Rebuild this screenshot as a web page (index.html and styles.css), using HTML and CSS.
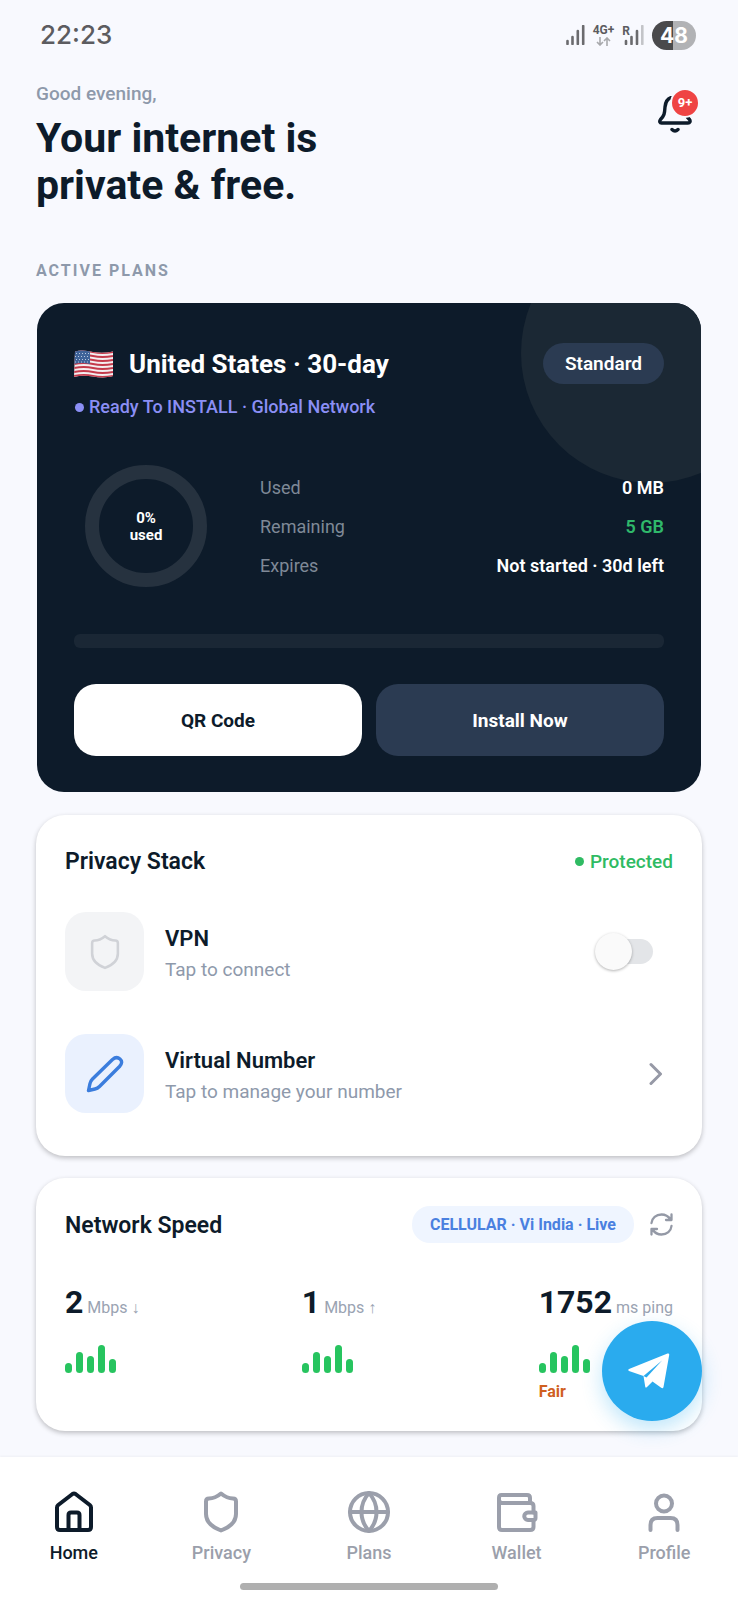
FILE: index.html
```html
<!DOCTYPE html>
<html lang="en">
<head>
    <meta charset="UTF-8">
    <meta name="viewport" content="width=device-width, initial-scale=1.0">
    <title>Home</title>
    <link rel="stylesheet" href="styles.css">
</head>
<body>
    <div class="status-bar">
        <span class="time">22:23</span>
        <div class="status-icons">
            <svg class="signal" width="19" height="20" viewBox="0 0 19 20">
                <path d="M1.5 16v3M6.5 12v7M11.8 6v13M17.2 1v18" stroke="#6b6b6e" stroke-width="2.6" stroke-linecap="round"/>
            </svg>
            <div class="network">
                <span>4G+</span>
                <svg width="15" height="9" viewBox="0 0 15 9" fill="none" stroke="#a8a9ac" stroke-width="1.6">
                    <path d="M4 0v8M1 5l3 3 3-3M11 9V1M8 4l3-3 3 3"/>
                </svg>
            </div>
            <div class="roaming">
                <span>R</span>
                <svg width="20" height="20" viewBox="0 0 20 20">
                    <path d="M2 16v3M7.5 12v7M13 6v13" stroke="#6b6b6e" stroke-width="2.6" stroke-linecap="round"/>
                    <path d="M18.3 1v18" stroke="#c3c4c8" stroke-width="2.6" stroke-linecap="round"/>
                </svg>
            </div>
            <span class="battery">48</span>
        </div>
    </div>

    <main class="content">
        <header class="header">
            <div>
                <p class="greeting">Good evening,</p>
                <h1>Your internet is<br>private &amp; free.</h1>
            </div>
            <button class="bell" type="button" aria-label="Notifications">
                <svg width="34" height="38" viewBox="0 0 34 38" fill="none" stroke="#0d1b2a" stroke-width="3.4" stroke-linecap="round" stroke-linejoin="round">
                    <path d="M17 1C10.500 1 7.500 5 7 11c-.4 7-.8 8.500-4.500 12.500-1.500 2-.5 3.500 1 3.500h26.500c1.800 0 2.800-1.500 1.500-3.500-4-4-4.500-5.500-4.500-12.500 0-6-3-10-10-10z"/>
                    <path d="M14 33.500q3 3 6 0"/>
                </svg>
                <span class="badge">9+</span>
            </button>
        </header>

        <h2 class="section-title">ACTIVE PLANS</h2>

        <section class="plan">
            <div class="plan-head">
                <svg class="flag" width="39" height="28" viewBox="0 0 39 28">
                    <clipPath id="wave"><path d="M1 1.500C8 -.5 13 1 19 2s13 1 20-.5V26c-7 2-14 1.500-20 .5S7 25 0 27z"/></clipPath>
                    <g clip-path="url(#wave)">
                        <path d="M0 0h39v28H0z" fill="#f4eef0"/>
                        <path d="M0 2q10-2 19 0t20 0M0 6q10-2 19 0t20 0M0 10q10-2 19 0t20 0M0 14q10-2 19 0t20 0M0 18q10-2 19 0t20 0M0 22q10-2 19 0t20 0M0 26q10-2 19 0t20 0" fill="none" stroke="#c43a4b" stroke-width="2"/>
                        <path d="M0 0h16v14Q8 12 0 14z" fill="#3f6399"/>
                        <path d="M2 3.500h14M1 6.500h14M2 9.500h14M1 12h14" stroke="#b9c9e0" stroke-width="1" stroke-dasharray="1 2"/>
                    </g>
                </svg>
                <h3>United States · 30-day</h3>
                <span class="tier">Standard</span>
            </div>
            <p class="plan-state"><i class="dot"></i>Ready To INSTALL · Global Network</p>
            <div class="usage">
                <div class="ring">0%<br>used</div>
                <dl class="stats">
                    <div><dt>Used</dt><dd>0 MB</dd></div>
                    <div><dt>Remaining</dt><dd class="green">5 GB</dd></div>
                    <div><dt>Expires</dt><dd>Not started · 30d left</dd></div>
                </dl>
            </div>
            <div class="progress"></div>
            <div class="actions">
                <button class="btn btn-light" type="button">QR Code</button>
                <button class="btn btn-dark" type="button">Install Now</button>
            </div>
        </section>

        <section class="card privacy">
            <div class="card-head">
                <h3>Privacy Stack</h3>
                <span class="protected"><i class="dot"></i>Protected</span>
            </div>
            <div class="row">
                <span class="tile tile-gray">
                    <svg width="30" height="36" viewBox="0 0 34 42" fill="none" stroke="#d0d2d7" stroke-width="3" stroke-linejoin="round">
                        <path d="M17 2.500C14 5 9 7.500 5 7.500Q2 7.500 2 10.500V23C2 32 9 36.500 17 39.500 25 36.500 32 32 32 23V10.500Q32 7.500 29 7.500C25 7.500 20 5 17 2.500z"/>
                    </svg>
                </span>
                <label class="row-text" for="vpn">
                    <strong>VPN</strong>
                    <span>Tap to connect</span>
                </label>
                <input class="switch" type="checkbox" id="vpn">
            </div>
            <a class="row" href="#">
                <span class="tile tile-blue">
                    <svg width="38" height="38" viewBox="0 0 38 38" fill="none" stroke="#3b7ddd" stroke-width="3.4" stroke-linecap="round" stroke-linejoin="round">
                        <path d="M2.500 35.500L4 28.500Q4.500 26 6.500 24L26.500 4.500Q30.500 1 34 4T33.500 11.500L13.500 31.500Q11.500 33.500 9 34z"/>
                    </svg>
                </span>
                <span class="row-text">
                    <strong>Virtual Number</strong>
                    <span>Tap to manage your number</span>
                </span>
                <svg class="chevron" width="14" height="24" viewBox="0 0 14 24" fill="none" stroke="#9699a6" stroke-width="3" stroke-linecap="round" stroke-linejoin="round">
                    <path d="M2 2.500l9.500 9.500L2 21.500"/>
                </svg>
            </a>
        </section>

        <section class="card speed">
            <div class="card-head">
                <h3>Network Speed</h3>
                <span class="carrier">CELLULAR · Vi India · Live</span>
                <button class="refresh" type="button" aria-label="Refresh">
                    <svg width="23" height="23" viewBox="0 0 23 23" fill="none" stroke="#9499a6" stroke-width="2.3" stroke-linecap="round" stroke-linejoin="round">
                        <path d="M1.500 10C2 5 6 1.500 11.500 1.500c4 0 7 2 9 5M21.500 1.500v5.500H16M21.500 13c-.5 5-4.500 8.500-10 8.500-4 0-7-2-9-5M1.500 21.500V16H7"/>
                    </svg>
                </button>
            </div>
            <div class="metrics">
                <div class="metric">
                    <p><b>2</b> Mbps ↓</p>
                    <div class="bars"><i class="b1"></i><i class="b2"></i><i class="b3"></i><i class="b4"></i><i class="b5"></i></div>
                </div>
                <div class="metric">
                    <p><b>1</b> Mbps ↑</p>
                    <div class="bars"><i class="b1"></i><i class="b2"></i><i class="b3"></i><i class="b4"></i><i class="b5"></i></div>
                </div>
                <div class="metric">
                    <p><b>1752</b> ms ping</p>
                    <div class="bars"><i class="b1"></i><i class="b2"></i><i class="b3"></i><i class="b4"></i><i class="b5"></i></div>
                    <span class="rating">Fair</span>
                </div>
            </div>
        </section>
    </main>

    <a class="fab" href="#" aria-label="Telegram support">
        <svg width="42" height="36" viewBox="0 0 42 36">
            <path d="M1 16L39.500.6q2-.6 1.700 1.500L35.500 34q-.5 2-2.300.8L24.500 28.500 19 34q-1.500 1.400-1.800-.6L15.500 23 1 18q-1.500-1 0-2z" fill="#fff"/>
            <path d="M15.500 23L34 7.500 18.500 24.500z" fill="#2aabee"/>
        </svg>
    </a>

    <footer class="tabbar">
        <nav class="tabs">
            <a class="tab active" href="#">
                <svg width="42" height="42" viewBox="0 0 42 42">
                    <path d="M4 16.500q0-1.500 1.200-2.500L19.500 3q1.500-1 3 0L36.800 14q1.200 1 1.200 2.500V36q0 3-3 3H7q-3 0-3-3z"/>
                    <path d="M15.500 39V24q0-2.500 2.500-2.500h6q2.500 0 2.500 2.500v15"/>
                </svg>
                Home
            </a>
            <a class="tab" href="#">
                <svg width="42" height="42" viewBox="-4 0 42 42">
                    <path d="M17 2.500C14 5 9 7.500 5 7.500Q2 7.500 2 10.500V23C2 32 9 36.500 17 39.500 25 36.500 32 32 32 23V10.500Q32 7.500 29 7.500C25 7.500 20 5 17 2.500z"/>
                </svg>
                Privacy
            </a>
            <a class="tab" href="#">
                <svg width="42" height="42" viewBox="0 0 42 42">
                    <circle cx="21" cy="21" r="19"/>
                    <path d="M2 21h38M21 2c-10 11-10 27 0 38M21 2c10 11 10 27 0 38"/>
                </svg>
                Plans
            </a>
            <a class="tab" href="#">
                <svg width="42" height="42" viewBox="0 0 42 42">
                    <path d="M34 12V7q0-3-3-3H5.500Q3 4 3 7v29q0 3 3 3h28q3.500 0 3.500-3v-7M3 8.500Q3 12 6.500 12H34q3.500 0 3.500 3v6.500"/>
                    <path d="M39.500 21.500H32a3.700 3.700 0 0 0 0 7.500h5q2.500 0 2.500-2z"/>
                </svg>
                Wallet
            </a>
            <a class="tab" href="#">
                <svg width="42" height="42" viewBox="0 0 42 42">
                    <circle cx="21" cy="12.500" r="8"/>
                    <path d="M7.500 39v-5q0-7 7-7h13q7 0 7 7v5"/>
                </svg>
                Profile
            </a>
        </nav>
        <div class="handle"></div>
    </footer>
</body>
</html>
```
FILE: styles.css
```css
*{box-sizing: border-box;}
html,body,h1,h2,h3,p,dl,dd{margin: 0; padding: 0;}
body{display: flex; flex-direction: column; min-height: 100vh; background: #f8f9fe; color: #0d1b2a; font-family: Roboto, "Liberation Sans", sans-serif;}
a{color: inherit; text-decoration: none;}
button{border: 0; padding: 0; background: none; color: inherit; font-family: inherit; cursor: pointer;}
svg{display: block; flex: none;}

/* status bar */
.status-bar{display: flex; justify-content: space-between; align-items: center; height: 70px; padding: 0 42px 0 40px;}
.time{font: 500 26px/32px Inter, sans-serif; color: #5c5c60;}
.status-icons{display: flex; align-items: center; gap: 8px;}
.network{display: flex; flex-direction: column; align-items: center; gap: 1px; font-size: 12px; line-height: 12px; font-weight: 700; color: #5c5c60;}
.roaming{display: flex; align-items: flex-start; font-size: 12px; line-height: 12px; font-weight: 700; color: #5c5c60;}
.roaming svg{margin-left: -6px;}
.battery{width: 44px; height: 29px; border-radius: 15px; background: linear-gradient(90deg, #4a4a4c 48%, #b1b2b5 48%); color: #fff; text-align: center; font: 700 21px/29px Inter, sans-serif;}

.content{padding: 12px 36px 26px;}

/* header */
.header{display: flex; justify-content: space-between; align-items: flex-start;}
.greeting{margin-bottom: 9px; font-size: 19px; line-height: 24px; font-weight: 500; color: #8e99ab;}
h1{font-size: 41px; line-height: 47px; font-weight: 700;}
.bell{position: relative; margin: 14px 10px 0 0;}
.badge{position: absolute; top: -8px; left: 12px; width: 30px; height: 30px; border: 2px solid #f8f9fe; border-radius: 50%; background: #ef4444; color: #fff; font-size: 13px; line-height: 26px; font-weight: 700;}
.section-title{margin: 52px 0 22px; font-size: 16px; line-height: 20px; font-weight: 700; letter-spacing: 2px; color: #8e99ab;}

/* active plan */
.plan{position: relative; overflow: hidden; margin: 0 1px 23px; padding: 40px 37px 36px; border-radius: 27px; background: #0d1b2a; color: #fff;}
.plan::before{content: ""; position: absolute; top: -80px; right: -80px; width: 260px; height: 260px; border-radius: 50%; background: #1b2834;}
.plan > *{position: relative;}
.plan-head{display: flex; align-items: center; height: 41px;}
.plan-head h3{flex: 1; margin-left: 16px; font-size: 26px; line-height: 32px; font-weight: 700;}
.tier{padding: 0 22px; border-radius: 21px; background: #2b3b52; font-size: 19px; line-height: 41px; font-weight: 600;}
.dot{width: 9px; height: 9px; border-radius: 50%; background: currentColor;}
.plan-state{display: flex; align-items: center; gap: 5px; margin: 12px 0 47px 1px; font-size: 18px; line-height: 22px; font-weight: 500; color: #8b8ff5;}
.usage{display: flex; align-items: center; gap: 53px; padding-left: 11px;}
.ring{display: flex; align-items: center; justify-content: center; width: 122px; height: 122px; padding-top: 2px; border: 14px solid #26323f; border-radius: 50%; text-align: center; font-size: 15px; line-height: 17px; font-weight: 700;}
.stats{flex: 1; display: flex; flex-direction: column; gap: 17px; padding-top: 2px; font-size: 18px; line-height: 22px;}
.stats div{display: flex; justify-content: space-between;}
dt{color: #7f8997;}
dd{font-weight: 600;}
.stats .green{color: #2fb86a;}
.progress{height: 14px; margin: 47px 0 36px; border-radius: 6px; background: #1a2735;}
.actions{display: flex; gap: 14px;}
.btn{flex: 1; height: 72px; padding-top: 1px; border-radius: 22px; font-size: 19px; font-weight: 700;}
.btn-light{background: #fff; color: #0d1b2a;}
.btn-dark{background: #2b3b52; color: #fff;}

/* white cards */
.card{padding: 28px 29px 21px; border-radius: 29px; background: #fff; box-shadow: 0 2px 5px rgba(0, 0, 0, .24);}
.card-head{display: flex; align-items: center; min-height: 36px;}
.card-head h3{flex: 1; padding-top: 2px; font-size: 23px; line-height: 30px; font-weight: 600;}
.privacy{margin-bottom: 22px;}
.privacy .card-head{margin-bottom: 12px;}
.protected{display: flex; align-items: center; gap: 6px; font-size: 19px; font-weight: 500; color: #2fbb63;}
.row{display: flex; align-items: center; padding: 21px 0 22px;}
.tile{display: flex; align-items: center; justify-content: center; width: 79px; height: 79px; border-radius: 21px;}
.tile-gray{background: #f3f4f6;}
.tile-blue{background: #eaf1fe;}
.row-text{flex: 1; display: flex; flex-direction: column; gap: 4px; margin-left: 21px; padding-top: 4px; font-size: 19px; line-height: 26px; color: #8e99ab;}
.row-text strong{font-size: 22px; line-height: 28px; font-weight: 600; color: #0d1b2a;}
.switch{appearance: none; position: relative; width: 58px; height: 37px; margin: 0 20px 0 0;}
.switch::before{content: ""; position: absolute; top: 6px; right: 0; width: 50px; height: 25px; border-radius: 13px; background: #e3e5e8;}
.switch::after{content: ""; position: absolute; top: 0; left: 0; width: 37px; height: 37px; border-radius: 50%; background: #fafafa; box-shadow: 0 1px 3px rgba(0, 0, 0, .3);}
.switch:checked::before{background: #22c55e;}
.switch:checked::after{left: 21px;}
.chevron{margin-right: 10px;}

/* network speed */
.speed{padding-bottom: 29px;}
.carrier{padding: 1px 18px 0; border-radius: 18px; background: #eff5ff; font-size: 16px; line-height: 36px; font-weight: 700; color: #4a80e0;}
.refresh{margin-left: 16px;}
.metrics{display: grid; grid-template-columns: 1fr 1fr auto; margin-top: 41px;}
.metric p{font-size: 16px; line-height: 20px; color: #9aa3b2;}
.metric b{font-size: 32px; line-height: 36px; color: #0d1b2a;}
.bars{display: flex; align-items: flex-end; gap: 4px; height: 28px; margin: 25px 0 9px;}
.bars i{width: 7px; border-radius: 4px; background: #27c45f;}
.b1{height: 10px;}
.b2{height: 21px;}
.b3{height: 17px;}
.b4{height: 28px;}
.b5{height: 14px;}
.rating{display: block; font-size: 16px; line-height: 20px; font-weight: 700; color: #d0601f;}

.fab{position: fixed; right: 36px; bottom: 179px; display: flex; align-items: center; justify-content: center; width: 100px; height: 100px; padding-right: 6px; border-radius: 50%; background: #2aabee; box-shadow: 0 8px 20px rgba(42, 171, 238, .3);}

/* bottom navigation */
.tabbar{margin-top: auto; padding: 34px 0 10px; background: #fff; box-shadow: 0 -1px 2px rgba(0, 0, 0, .04);}
.tabs{display: grid; grid-template-columns: repeat(5, 1fr);}
.tab{display: flex; flex-direction: column; align-items: center; gap: 9px; font-size: 18px; line-height: 22px; font-weight: 500; color: #9b9fab;}
.tab svg{fill: none; stroke: currentColor; stroke-width: 4; stroke-linecap: round; stroke-linejoin: round;}
.active{color: #0d1b2a;}
.handle{width: 35%; height: 7px; margin: 19px auto 0; border-radius: 4px; background: #afafaf;}
```
